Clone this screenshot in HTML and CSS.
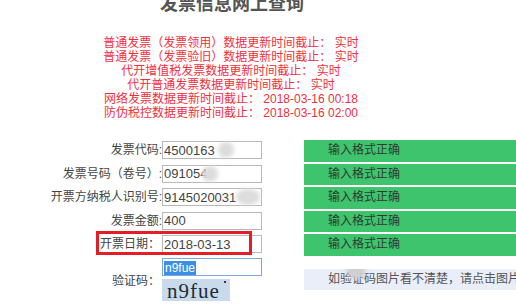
FILE: index.html
```html
<!DOCTYPE html>
<html lang="zh-CN">
<head>
    <meta charset="UTF-8">
    <title>发票信息网上查询</title>
    <link rel="stylesheet" href="styles.css">
</head>
<body>
    <div class="page">
        <h1 class="title">发票信息网上查询</h1>

        <div class="notice">
            <p>普通发票（发票领用）数据更新时间截止： 实时</p>
            <p>普通发票（发票验旧）数据更新时间截止： 实时</p>
            <p>代开增值税发票数据更新时间截止： 实时</p>
            <p>代开普通发票数据更新时间截止： 实时</p>
            <p>网络发票数据更新时间截止： 2018-03-16 00:18</p>
            <p>防伪税控数据更新时间截止： 2018-03-16 02:00</p>
        </div>

        <div class="form">
            <div class="row">
                <label class="label">发票代码:</label>
                <div class="field">
                    <input class="input" type="text" value="4500163">
                    <span class="blur" style="left: 56px; width: 16px;"></span>
                </div>
                <div class="spacer"></div>
                <div class="status">输入格式正确</div>
            </div>
            <div class="row">
                <label class="label">发票号码（卷号）:</label>
                <div class="field">
                    <input class="input" type="text" value="091054">
                    <span class="blur" style="left: 40px; width: 16px;"></span>
                </div>
                <div class="spacer"></div>
                <div class="status">输入格式正确</div>
            </div>
            <div class="row">
                <label class="label">开票方纳税人识别号:</label>
                <div class="field">
                    <input class="input" type="text" value="9145020031">
                    <span class="blur" style="left: 74px; width: 24px;"></span>
                </div>
                <div class="spacer"></div>
                <div class="status">输入格式正确</div>
            </div>
            <div class="row">
                <label class="label">发票金额:</label>
                <div class="field">
                    <input class="input" type="text" value="400">
                </div>
                <div class="spacer"></div>
                <div class="status">输入格式正确</div>
            </div>
            <div class="row row-date">
                <label class="label label-wide">开票日期：</label>
                <div class="field">
                    <input class="input" type="text" value="2018-03-13">
                </div>
                <div class="spacer"></div>
                <div class="status">输入格式正确</div>
                <div class="mark"></div>
            </div>
            <div class="row row-code">
                <label class="label label-wide">验证码：</label>
                <div class="code-col">
                    <div class="input input-focus"><span class="selected">n9fue</span></div>
                    <div class="captcha">n9fue<span class="dot"></span></div>
                </div>
                <div class="spacer"></div>
                <div class="hint">如验证码图片看不清楚，请点击图片<span class="blur blur-hint"></span></div>
            </div>
        </div>
    </div>
</body>
</html>
```

FILE: styles.css
```css
/* 기본 */
* {
    margin: 0;
    padding: 0;
    box-sizing: border-box;
}
body {
    width: 516px;
    height: 308px;
    overflow: hidden;
    background-color: #fff;
    font-family: 'Liberation Sans', 'Noto Sans CJK SC', sans-serif;
    color: #444;
}
.page {
    width: 516px;
}

/* 제목 */
.title {
    width: 464px;
    margin-top: -8px;
    font-size: 18px;
    line-height: 24px;
    font-weight: bold;
    color: #555;
    text-align: center;
}

/* 빨간 안내문 */
.notice {
    width: 462px;
    margin-top: 20px;
    text-align: center;
    color: #f0303e;
    font-size: 12px;
    line-height: 14px;
}

/* 폼 */
.form {
    margin-top: 20px;
    display: flex;
    flex-direction: column;
    gap: 2px;
}
.row {
    display: grid;
    grid-template-columns: 162px 100px 42px 212px;
    height: 21.5px;
    position: relative;
}
.label {
    font-size: 12px;
    line-height: 20px;
    text-align: right;
    color: #444;
    white-space: nowrap;
}
.label-wide {
    padding-right: 2px;
}
.field {
    position: relative;
    padding-top: 1px;
}
.input {
    display: block;
    width: 100px;
    height: 18px;
    border: 1px solid #b9b9b9;
    background: #fff;
    font-family: 'Liberation Sans', 'Noto Sans CJK SC', sans-serif;
    font-size: 13px;
    line-height: 16px;
    color: #444;
    padding: 0 1px;
    outline: none;
}
.blur {
    position: absolute;
    top: 2px;
    height: 16px;
    border-radius: 50%;
    background: #dcdcdc;
    filter: blur(2px);
}
.status {
    background-color: #3dc46d;
    color: #2f3a33;
    font-size: 12px;
    line-height: 21.5px;
    padding-left: 24px;
}

/* 빨간 표시 상자 */
.mark {
    position: absolute;
    left: 96px;
    top: -3px;
    width: 156px;
    height: 24px;
    border: 3px solid #e41e26;
}

/* 验证码 */
.row-code {
    height: 43px;
}
.row-code .label {
    align-self: center;
    padding-top: 3px;
}
.code-col {
    display: flex;
    flex-direction: column;
    gap: 3px;
}
.input-focus {
    border-color: #7ea6dc;
    padding: 1px 1px;
}
.selected {
    display: inline-block;
    background: #3b8fe8;
    color: #fff;
    font-size: 12px;
    line-height: 14px;
    padding: 0 1px;
}
.captcha {
    position: relative;
    width: 68px;
    height: 22px;
    background-color: #c9dbea;
    font-family: 'Liberation Serif', serif;
    font-size: 21px;
    line-height: 24px;
    color: #1e2a35;
    padding-left: 5px;
    letter-spacing: 1px;
}
.dot {
    position: absolute;
    left: 62px;
    top: 2px;
    width: 2px;
    height: 2px;
    background: #333;
}
.hint {
    position: relative;
    align-self: center;
    height: 21px;
    background-color: #e9eef9;
    color: #555;
    font-size: 12px;
    line-height: 21px;
    padding-left: 24px;
    white-space: nowrap;
    overflow: hidden;
}
.blur-hint {
    left: 42px;
    top: -6px;
    width: 20px;
    height: 16px;
    background: #cfcfcf;
}
```
